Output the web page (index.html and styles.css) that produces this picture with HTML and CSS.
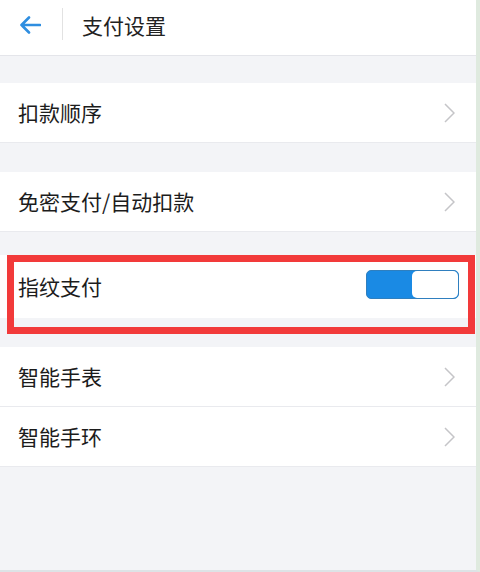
FILE: index.html
```html
<!DOCTYPE html>
<html lang="zh-CN">
<head>
    <meta charset="UTF-8">
    <meta name="viewport" content="width=device-width, initial-scale=1.0">
    <title>支付设置</title>
    <link rel="stylesheet" href="styles.css">
</head>
<body>
    <main class="page">
        <header class="top-bar">
            <span class="back">
                <svg width="22" height="18" viewBox="0 0 22 18">
                    <path d="M21 9H2.5M10 1.5L2.5 9l7.5 7.5" fill="none" stroke="#2f8ee0" stroke-width="2.6" stroke-linecap="round" stroke-linejoin="round"/>
                </svg>
            </span>
            <span class="divider"></span>
            <h1 class="title">支付设置</h1>
        </header>

        <div class="group g1">
            <div class="row">
                <span class="label">扣款顺序</span>
                <svg class="chevron" width="11" height="20" viewBox="0 0 11 20"><path d="M1 1l9 9-9 9" fill="none" stroke="#c5c5c8" stroke-width="1.5"/></svg>
            </div>
        </div>

        <div class="group g2">
            <div class="row">
                <span class="label">免密支付/自动扣款</span>
                <svg class="chevron" width="11" height="20" viewBox="0 0 11 20"><path d="M1 1l9 9-9 9" fill="none" stroke="#c5c5c8" stroke-width="1.5"/></svg>
            </div>
        </div>

        <div class="group g3 marked">
            <div class="row">
                <span class="label">指纹支付</span>
                <span class="toggle"><span class="knob"></span></span>
            </div>
            <span class="highlight"></span>
        </div>

        <div class="group g4">
            <div class="row">
                <span class="label">智能手表</span>
                <svg class="chevron" width="11" height="20" viewBox="0 0 11 20"><path d="M1 1l9 9-9 9" fill="none" stroke="#c5c5c8" stroke-width="1.5"/></svg>
            </div>
            <div class="row">
                <span class="label">智能手环</span>
                <svg class="chevron" width="11" height="20" viewBox="0 0 11 20"><path d="M1 1l9 9-9 9" fill="none" stroke="#c5c5c8" stroke-width="1.5"/></svg>
            </div>
        </div>
    </main>
</body>
</html>
```

FILE: styles.css
```css
html, body {
    margin: 0;
    padding: 0;
}
body {
    width: 480px;
    height: 572px;
    overflow: hidden;
    background-color: #f3f4f7;
    font-family: "Noto Sans CJK SC", "Noto Sans", sans-serif;
    color: #1c1c1c;
}
.page {
    width: 476px;
    height: 570px;
    border-right: 4px solid #dfeadf;
    border-bottom: 2px solid #dde3e6;
    background-color: #f3f4f7;
}

.top-bar {
    height: 56px;
    background-color: #fff;
    border-bottom: 1px solid #e4e5ea;
    display: flex;
    align-items: center;
    box-sizing: border-box;
}
.back {
    width: 62px;
    display: flex;
    padding-left: 19px;
    box-sizing: border-box;
    margin-top: -6px;
}
.divider {
    width: 1px;
    height: 32px;
    background-color: #e2e2e2;
    margin-top: -8px;
}
.title {
    margin: -6px 0 0 19px;
    font-size: 21px;
    font-weight: normal;
    color: #222;
}

.group {
    background-color: #fff;
}
.g1 {
    margin-top: 27px;
}
.g2 {
    margin-top: 29px;
}
.g3 {
    margin-top: 23px;
}
.g4 {
    margin-top: 29px;
}

.row {
    height: 60px;
    display: flex;
    align-items: center;
    justify-content: space-between;
    padding: 0 21px 0 18px;
    border-bottom: 1px solid #e9eaee;
    box-sizing: border-box;
}
.label {
    font-size: 21px;
    margin-top: -2px;
}
.chevron {
    display: block;
}

.marked {
    position: relative;
    height: 63px;
}
.marked .row {
    height: 63px;
    border-bottom: none;
    padding-right: 17px;
}
.toggle {
    width: 93px;
    height: 29px;
    border-radius: 5px;
    background-color: #1a8ae4;
    box-sizing: border-box;
    border: 1.5px solid #2f7fbf;
    display: flex;
    justify-content: flex-end;
    margin-top: -4px;
}
.knob {
    width: 46px;
    height: 100%;
    background-color: #fff;
    border-radius: 5px;
}
.highlight {
    position: absolute;
    left: 7px;
    top: 0;
    width: 468px;
    height: 79px;
    border: 7px solid #f23a3a;
    box-sizing: border-box;
}
```
